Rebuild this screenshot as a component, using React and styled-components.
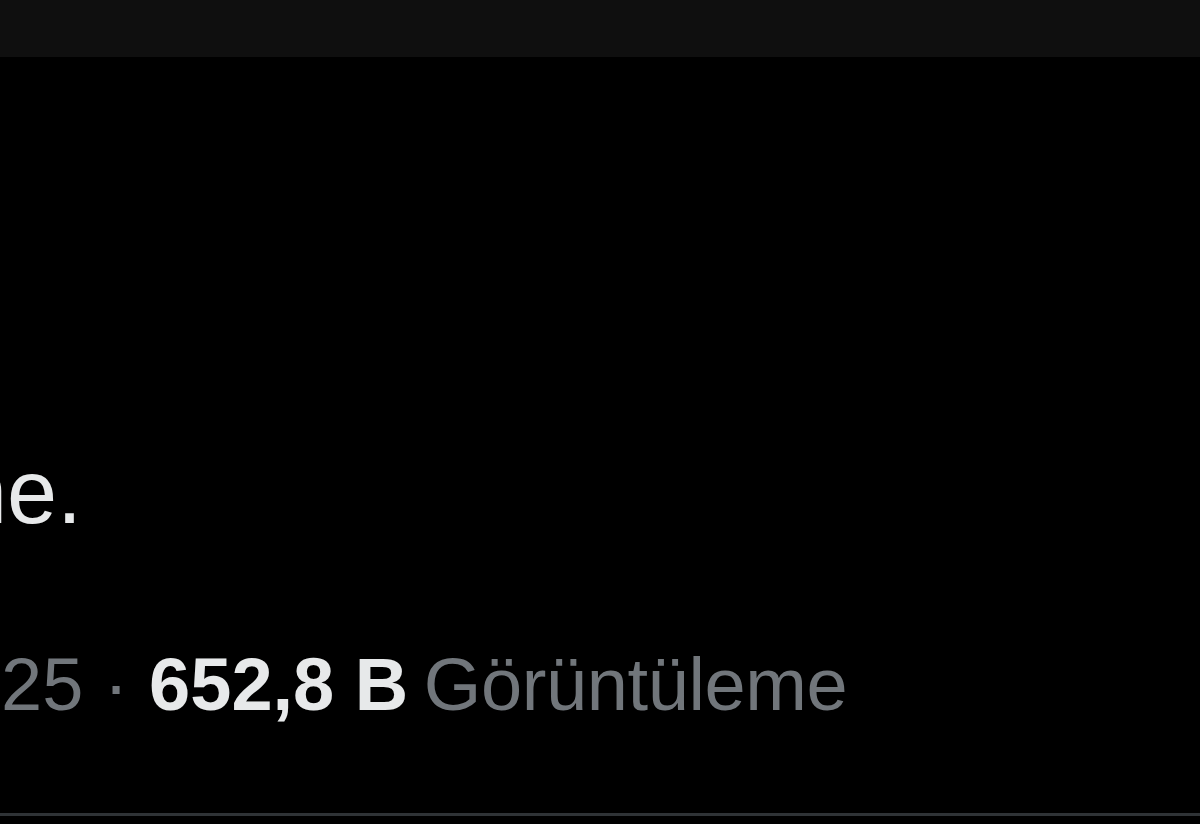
import React from "react";
import styled, { createGlobalStyle } from "styled-components";

const GlobalStyle = createGlobalStyle`
  html, body {
    margin: 0;
    padding: 0;
    background: #000;
  }
  body {
    font-family: "Liberation Sans", Arial, sans-serif;
    overflow: hidden;
  }
`;

const Page = styled.div`
  width: 1200px;
  height: 824px;
  background: #000;
  display: flex;
  flex-direction: column;
  overflow: hidden;
`;

const TopBar = styled.div`
  height: 57px;
  flex-shrink: 0;
  background: #0f0f0f;
`;

const Tweet = styled.article`
  display: flex;
  flex-direction: column;
  padding-top: 375px;
  padding-bottom: 80px;
  border-bottom: 3px solid #2f3336;
`;

const Body = styled.p`
  margin: 0 0 0 -43px;
  font-size: 90px;
  line-height: 120px;
  color: #e7e9ea;
  white-space: nowrap;
`;

const Meta = styled.div`
  margin: 85px 0 0 1px;
  font-size: 74px;
  line-height: 96px;
  color: #71767b;
  white-space: nowrap;
`;

const Dot = styled.span`
  margin: 0 ${(p) => p.$gap}px;
`;

const Count = styled.strong`
  font-weight: 700;
  color: #e7e9ea;
`;

const Label = styled.span`
  margin-left: -5px;
  letter-spacing: -0.4px;
`;

export default function App() {
  return (
    <>
      <GlobalStyle />
      <Page>
        <TopBar />
        <Tweet>
          <Body>ne.</Body>
          <Meta>
            25<Dot $gap={0}> · </Dot>
            <Count>652,8 B</Count> <Label>Görüntüleme</Label>
          </Meta>
        </Tweet>
      </Page>
    </>
  );
}
